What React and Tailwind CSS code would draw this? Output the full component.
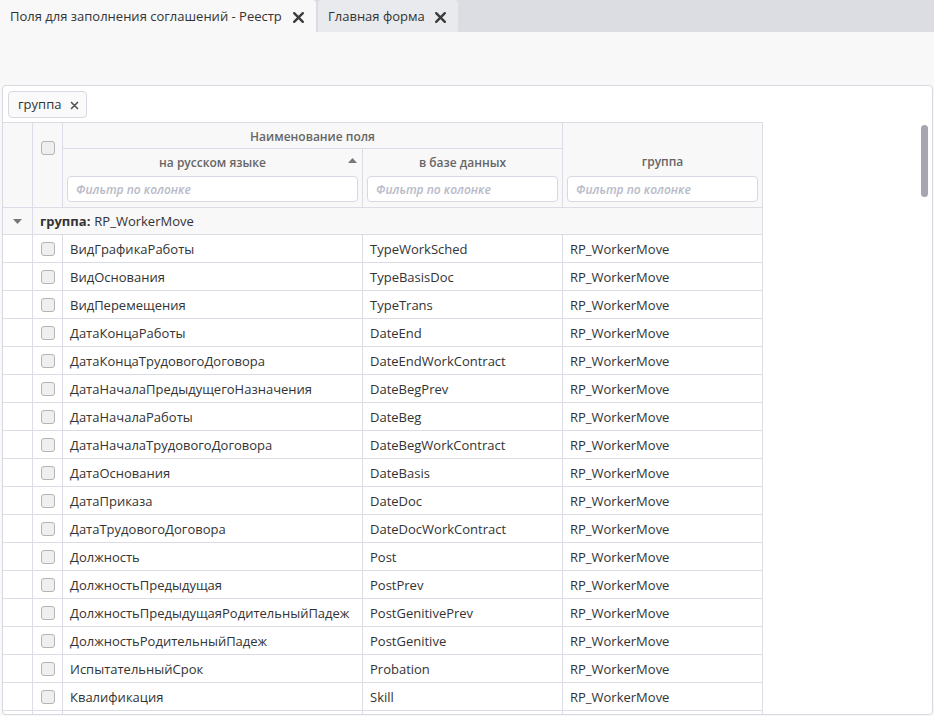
import React from "react";

const ROWS = [
  ["ВидГрафикаРаботы", "TypeWorkSched"],
  ["ВидОснования", "TypeBasisDoc"],
  ["ВидПеремещения", "TypeTrans"],
  ["ДатаКонцаРаботы", "DateEnd"],
  ["ДатаКонцаТрудовогоДоговора", "DateEndWorkContract"],
  ["ДатаНачалаПредыдущегоНазначения", "DateBegPrev"],
  ["ДатаНачалаРаботы", "DateBeg"],
  ["ДатаНачалаТрудовогоДоговора", "DateBegWorkContract"],
  ["ДатаОснования", "DateBasis"],
  ["ДатаПриказа", "DateDoc"],
  ["ДатаТрудовогоДоговора", "DateDocWorkContract"],
  ["Должность", "Post"],
  ["ДолжностьПредыдущая", "PostPrev"],
  ["ДолжностьПредыдущаяРодительныйПадеж", "PostGenitivePrev"],
  ["ДолжностьРодительныйПадеж", "PostGenitive"],
  ["ИспытательныйСрок", "Probation"],
  ["Квалификация", "Skill"],
];

const COLS = "grid grid-cols-[30px_30px_300px_200px_200px] w-[760px]";

function CloseIcon({ size = 12, className = "" }) {
  return (
    <svg width={size} height={size} viewBox="0 0 12 12" className={className}>
      <path d="M2 2L10 10M10 2L2 10" stroke="currentColor" strokeWidth="2.2" strokeLinecap="round" />
    </svg>
  );
}

function Checkbox() {
  return <div className="w-[14px] h-[14px] rounded-[3px] border border-[#b4b4b8] bg-[#efefef]" />;
}

function FilterInput() {
  return (
    <div className="h-[26px] mx-[4px] rounded-[4px] border border-[#d8d8e2] bg-white flex items-center px-[8px] pt-[2px] text-[12px] italic text-[#b8bac8]">
      Фильтр по колонке
    </div>
  );
}

function Row({ ru, db, group }) {
  return (
    <div className={`${COLS} h-[28px] border-b border-[#dcdce6]`}>
      <div className="border-r border-[#dcdce6]" />
      <div className="border-r border-[#dcdce6] flex items-center justify-center">
        <Checkbox />
      </div>
      <div className="border-r border-[#dcdce6] flex items-center pl-[7px] pt-[2px] whitespace-nowrap">{ru}</div>
      <div className="border-r border-[#dcdce6] flex items-center pl-[7px] pt-[2px]">{db}</div>
      <div className="border-r border-[#dcdce6] flex items-center pl-[7px] pt-[2px]">{group}</div>
    </div>
  );
}

export default function App() {
  return (
    <div
      className="w-[934px] h-[716px] bg-[#f8f8f8] overflow-hidden text-[13px] text-[#333]"
      style={{ fontFamily: '"Open Sans", "Noto Sans", sans-serif' }}
    >
      {/* tab strip */}
      <div className="h-[32px] bg-[#dcdde2] flex items-stretch">
        <div className="w-[316px] bg-[#f8f8f8] flex items-center pl-[10px] pr-[11px] pt-[2px] justify-between rounded-tr-[4px]">
          <span>Поля для заполнения соглашений - Реестр</span>
          <CloseIcon size={13} className="text-[#3a3a3a]" />
        </div>
        <div className="w-[140px] ml-[2px] bg-[#e9eaee] flex items-center pl-[10px] pr-[11px] pt-[2px] justify-between rounded-t-[4px] rounded-b-[2px]">
          <span>Главная форма</span>
          <CloseIcon size={13} className="text-[#3a3a3a]" />
        </div>
      </div>

      {/* toolbar area */}
      <div className="h-[53px]" />

      {/* grid panel */}
      <div className="relative ml-[2px] w-[931px] h-[630px] bg-white border border-[#d8d8e2] rounded-[4px] overflow-hidden">
        <div className="px-[5px] pt-[5px] h-[36px]">
          <div className="inline-flex items-center h-[27px] pl-[9px] pr-[7px] pt-[1px] gap-[9px] rounded-[4px] border border-[#d8d8e2] bg-[#fafafa]">
            <span>группа</span>
            <CloseIcon size={9} className="text-[#555]" />
          </div>
        </div>

        {/* header */}
        <div className={`${COLS} grid-rows-[26px_26px_32px] bg-[#f8f8f8] border-t border-[#dcdce6] text-[12px] font-semibold text-[#666]`}>
          <div className="row-span-3 border-r border-[#dcdce6]" />
          <div className="row-span-3 border-r border-[#dcdce6] pt-[18px] flex justify-center">
            <Checkbox />
          </div>
          <div className="col-span-2 border-b border-r border-[#dcdce6] flex items-center justify-center pt-[2px]">
            Наименование поля
          </div>
          <div className="row-span-2 border-r border-[#dcdce6] flex items-end justify-center pb-[4px]">
            группа
          </div>
          <div className="relative border-r border-[#dcdce6] flex items-center justify-center pt-[2px]">
            на русском языке
            <svg width="9" height="5" viewBox="0 0 9 5" className="absolute right-[5px] top-[9px]">
              <path d="M0 5L4.5 0L9 5Z" fill="#777" />
            </svg>
          </div>
          <div className="border-r border-[#dcdce6] flex items-center justify-center pt-[2px]">в базе данных</div>
          <div className="border-r border-[#dcdce6] pt-[1px]">
            <FilterInput />
          </div>
          <div className="border-r border-[#dcdce6] pt-[1px]">
            <FilterInput />
          </div>
          <div className="border-r border-[#dcdce6] pt-[1px]">
            <FilterInput />
          </div>
        </div>

        {/* group row */}
        <div className="flex h-[28px] w-[760px] bg-[#f8f8f8] border-t border-b border-[#dcdce6]">
          <div className="w-[30px] border-r border-[#dcdce6] flex items-center justify-center">
            <svg width="9" height="5" viewBox="0 0 9 5">
              <path d="M0 0L9 0L4.5 5Z" fill="#777" />
            </svg>
          </div>
          <div className="flex-1 border-r border-[#dcdce6] flex items-center pl-[7px] pt-[2px]">
            <span className="font-bold">группа:</span>
            <span className="ml-[4px]">RP_WorkerMove</span>
          </div>
        </div>

        {/* data rows */}
        {ROWS.map(([ru, db]) => (
          <Row key={ru} ru={ru} db={db} group="RP_WorkerMove" />
        ))}
        <Row ru="" db="" group="" />

        {/* scrollbar thumb */}
        <div className="absolute right-[4px] top-[39px] w-[7px] h-[72px] rounded-full bg-[#a6a7ae]" />
      </div>
    </div>
  );
}
